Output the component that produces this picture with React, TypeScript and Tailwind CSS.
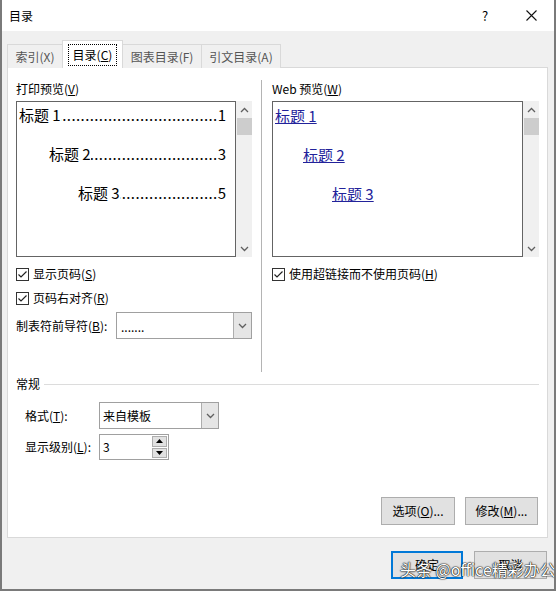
import React from 'react';

function Check() {
  return (
    <span className="w-[13px] h-[13px] border border-[#333333] bg-white flex items-center justify-center shrink-0">
      <svg width="11" height="11" viewBox="0 0 11 11">
        <path d="M1.5 5.5 L4 8 L9.5 2.5" fill="none" stroke="#222222" strokeWidth="1.2" />
      </svg>
    </span>
  );
}

function Chevron({ up }: { up?: boolean }) {
  return (
    <svg width="9" height="6" viewBox="0 0 9 6">
      <path d={up ? 'M1 5 L4.5 1.5 L8 5' : 'M1 1 L4.5 4.5 L8 1'} fill="none" stroke="#606060" strokeWidth="1.3" />
    </svg>
  );
}

function ScrollBar() {
  return (
    <div className="w-[16px] h-full bg-[#f0f0f0] flex flex-col items-center">
      <div className="h-[17px] flex items-center justify-center">
        <Chevron up />
      </div>
      <div className="w-[15px] h-[17px] bg-[#cdcdcd]" />
      <div className="flex-1" />
      <div className="h-[17px] flex items-center justify-center">
        <Chevron />
      </div>
    </div>
  );
}

function CheckRow({ children }: { children: React.ReactNode }) {
  return (
    <div className="flex items-center gap-[4px] h-[16px]">
      <Check />
      <span className="leading-[16px]">{children}</span>
    </div>
  );
}

function Btn({ children, cls }: { children: React.ReactNode; cls: string }) {
  return (
    <div className={`h-[28px] bg-[#e1e1e1] flex items-center justify-center ${cls}`}>{children}</div>
  );
}

const leader = '.'.repeat(40);

const printRows = [
  { cls: 'pl-[0px] mt-[0px]', label: '标题 1', page: '1' },
  { cls: 'pl-[30px] mt-[19px]', label: '标题 2', page: '3' },
  { cls: 'pl-[59px] mt-[19px]', label: '标题 3', page: '5' },
];

const webRows = [
  { cls: 'pl-[0px] mt-[0px]', label: '标题 1' },
  { cls: 'pl-[28px] mt-[19px]', label: '标题 2' },
  { cls: 'pl-[57px] mt-[19px]', label: '标题 3' },
];

export default function App() {
  return (
    <div className="relative w-[556px] h-[591px] overflow-hidden bg-[#f0f0f0] border-l-2 border-r-2 border-b-2 border-[#7a7a7a] flex flex-col text-[12px] text-black font-['Noto_Sans_CJK_SC','Noto_Sans',sans-serif]">
      {/* Title bar */}
      <div className="h-[31px] bg-white flex items-center pl-[7px] shrink-0">
        <span className="text-[12px] leading-[16px]">目录</span>
        <div className="flex-1" />
        <div className="w-[46px] h-[31px] flex items-center justify-center text-[13px]">?</div>
        <div className="w-[46px] h-[31px] flex items-center justify-center">
          <svg width="11" height="11" viewBox="0 0 11 11">
            <path d="M0.5 0.5 L10.5 10.5 M10.5 0.5 L0.5 10.5" stroke="#111111" strokeWidth="1.1" fill="none" />
          </svg>
        </div>
      </div>

      {/* Body */}
      <div className="flex-1 flex flex-col pt-[9px] pl-[5px] pr-[6px]">
        {/* Tabs */}
        <div className="flex items-end h-[28px] -mb-px relative z-10">
          <div className="w-[56px] h-[24px] border border-b-0 border-[#d9d9d9] bg-[#f0f0f0] flex items-center justify-center text-[#555555]">
            索引(X)
          </div>
          <div className="w-[61px] h-[28px] -ml-px border border-b-0 border-[#d9d9d9] bg-white flex items-start justify-center pt-[3px]">
            <span className="h-[22px] px-[4px] border border-dotted border-black flex items-center leading-[16px]">
              目录(<u>C</u>)
            </span>
          </div>
          <div className="w-[80px] h-[24px] -ml-px border border-b-0 border-[#d9d9d9] bg-[#f0f0f0] flex items-center justify-center text-[#555555]">
            图表目录(F)
          </div>
          <div className="w-[80px] h-[24px] -ml-px border border-b-0 border-[#d9d9d9] bg-[#f0f0f0] flex items-center justify-center text-[#555555]">
            引文目录(A)
          </div>
        </div>

        {/* Panel */}
        <div className="w-[541px] h-[471px] bg-white border border-[#d9d9d9] flex flex-col pt-[12px] px-[8px]">
          <div className="flex h-[292px]">
            {/* Left column */}
            <div className="w-[236px] pt-[1px] flex flex-col">
              <div className="h-[16px] leading-[16px]">
                打印预览(<u>V</u>)
              </div>
              <div className="mt-[4px] h-[156px] flex">
                <div className="w-[220px] h-full border border-[#646464] pt-[3px] pl-[2px] pr-[9px] flex flex-col">
                  {printRows.map((r) => (
                    <div key={r.label} className={`flex h-[20px] leading-[20px] text-[15px] ${r.cls}`}>
                      <span className="whitespace-nowrap shrink-0">{r.label}</span>
                      <span className="flex-1 min-w-0 overflow-hidden whitespace-nowrap tracking-[0.4px] [direction:rtl]">
                        {leader}
                      </span>
                      <span className="shrink-0">{r.page}</span>
                    </div>
                  ))}
                </div>
                <ScrollBar />
              </div>
              <div className="mt-[9px]">
                <CheckRow>
                  显示页码(<u>S</u>)
                </CheckRow>
              </div>
              <div className="mt-[8px]">
                <CheckRow>
                  页码右对齐(<u>R</u>)
                </CheckRow>
              </div>
              <div className="mt-[6px] flex items-center">
                <span className="w-[100px] leading-[16px]">
                  制表符前导符(<u>B</u>):
                </span>
                <div className="w-[136px] h-[27px] border border-[#a0a0a0] bg-white flex">
                  <div className="flex-1 pl-[4px] flex items-center leading-[16px] pt-[2px]">.......</div>
                  <div className="w-[18px] h-full bg-[#e5e5e5] border-l border-[#adadad] flex items-center justify-center">
                    <Chevron />
                  </div>
                </div>
              </div>
            </div>

            {/* Separator */}
            <div className="ml-[9px] mr-[10px] w-px h-full bg-[#b4b4b4]" />

            {/* Right column */}
            <div className="flex-1 pt-[1px] flex flex-col">
              <div className="h-[16px] leading-[16px]">
                Web 预览(<u>W</u>)
              </div>
              <div className="mt-[4px] h-[156px] flex">
                <div className="w-[251px] h-full border border-[#646464] pt-[4px] pl-[2px] flex flex-col">
                  {webRows.map((r) => (
                    <div key={r.label} className={`flex h-[20px] leading-[20px] text-[15px] ${r.cls}`}>
                      <span className="underline text-[#22229a] whitespace-nowrap">{r.label}</span>
                    </div>
                  ))}
                </div>
                <ScrollBar />
              </div>
              <div className="mt-[9px]">
                <CheckRow>
                  使用超链接而不使用页码(<u>H</u>)
                </CheckRow>
              </div>
            </div>
          </div>

          {/* General */}
          <div className="mt-[4px] h-[16px] flex items-center">
            <span className="leading-[16px]">常规</span>
            <div className="ml-[4px] flex-1 h-px bg-[#dcdcdc]" />
          </div>
          <div className="mt-[10px] pl-[9px] flex items-center">
            <span className="w-[74px] leading-[16px]">
              格式(<u>T</u>):
            </span>
            <div className="w-[120px] h-[27px] border border-[#a0a0a0] bg-white flex">
              <div className="flex-1 pl-[3px] flex items-center leading-[16px]">来自模板</div>
              <div className="w-[17px] h-full bg-[#e5e5e5] border-l border-[#adadad] flex items-center justify-center">
                <Chevron />
              </div>
            </div>
          </div>
          <div className="mt-[5px] pl-[9px] flex items-center">
            <span className="w-[74px] leading-[16px]">
              显示级别(<u>L</u>):
            </span>
            <div className="w-[70px] h-[26px] border border-[#a0a0a0] bg-white flex items-center">
              <div className="flex-1 pl-[3px] leading-[16px]">3</div>
              <div className="w-[15px] h-[22px] mr-[1px] flex flex-col gap-[1px]">
                <div className="flex-1 bg-[#e1e1e1] border border-[#adadad] flex items-center justify-center">
                  <svg width="7" height="4" viewBox="0 0 7 4"><path d="M0 4 L3.5 0 L7 4 Z" fill="#000000" /></svg>
                </div>
                <div className="flex-1 bg-[#e1e1e1] border border-[#adadad] flex items-center justify-center">
                  <svg width="7" height="4" viewBox="0 0 7 4"><path d="M0 0 L3.5 4 L7 0 Z" fill="#000000" /></svg>
                </div>
              </div>
            </div>
          </div>
          <div className="mt-[37px] pr-[1px] flex justify-end gap-[10px]">
            <Btn cls="w-[74px] border border-[#adadad]">
              选项(<u>O</u>)...
            </Btn>
            <Btn cls="w-[73px] border border-[#adadad]">
              修改(<u>M</u>)...
            </Btn>
          </div>
        </div>

        {/* Bottom buttons */}
        <div className="pt-[13px] pr-[1px] flex justify-end gap-[11px]">
          <Btn cls="w-[72px] border-2 border-[#0078d7]">确定</Btn>
          <Btn cls="w-[73px] border border-[#adadad]">取消</Btn>
        </div>
      </div>

      {/* Watermark */}
      <div className="absolute left-[398px] top-[559px] text-[16px] leading-[20px] text-white whitespace-nowrap [text-shadow:0_0_1px_#000,0_0_1px_#000,0_0_2px_#333]">
        头条 @office精彩办公
      </div>
    </div>
  );
}
